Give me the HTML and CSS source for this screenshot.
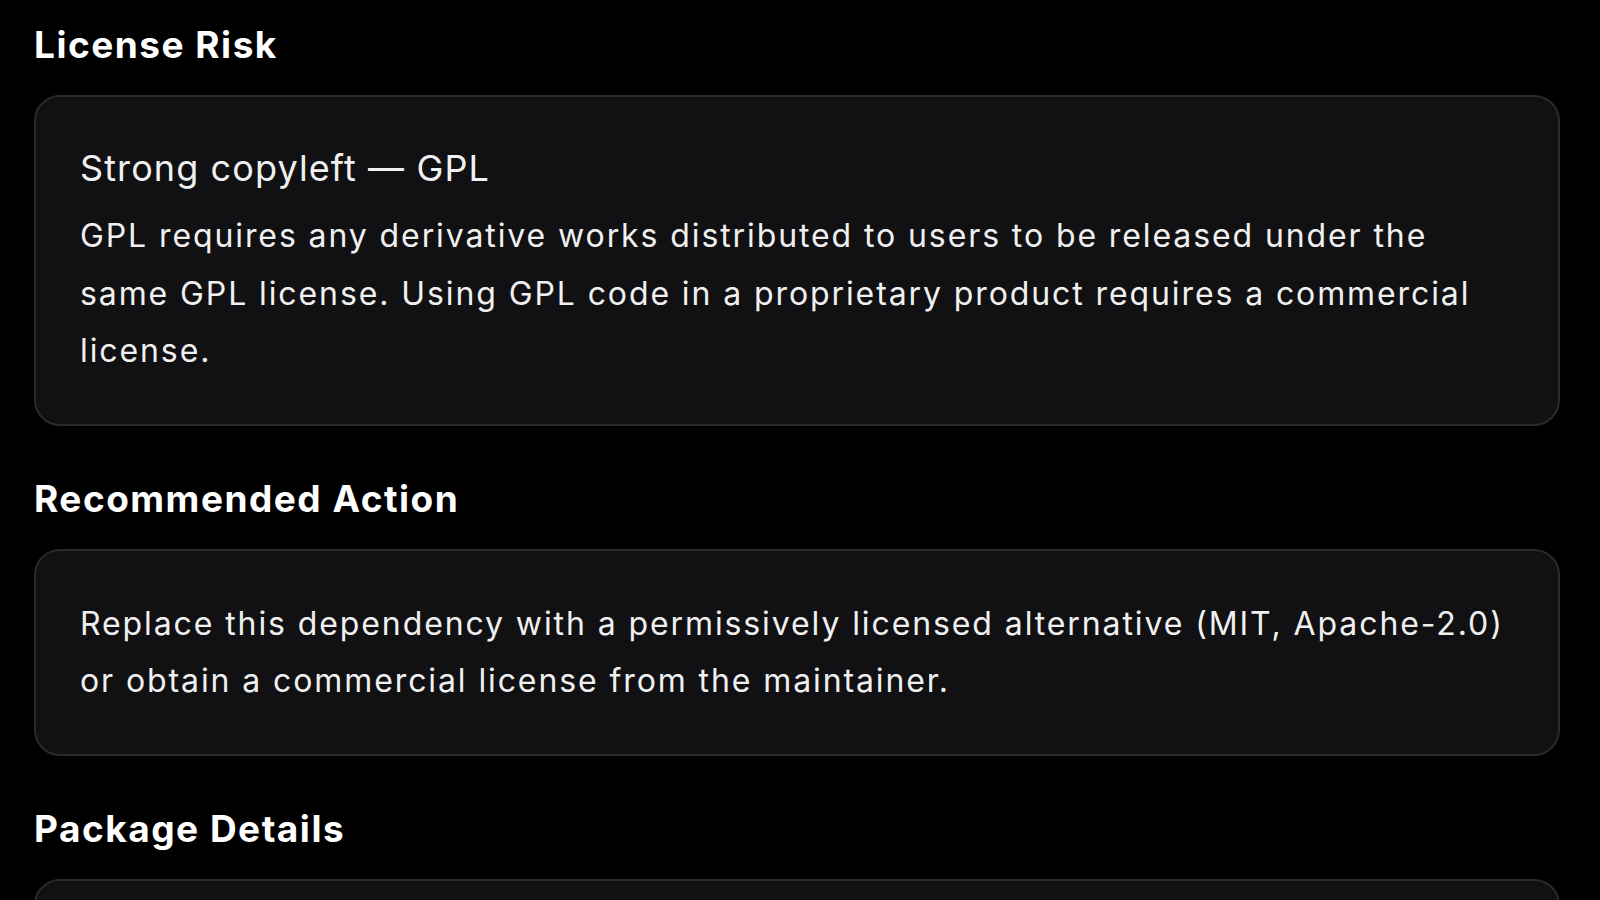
FILE: index.html
```html
<!DOCTYPE html>
<html lang="en">
<head>
  <meta charset="UTF-8">
  <meta name="viewport" content="width=device-width, initial-scale=1.0">
  <title>License Risk</title>
  <link rel="stylesheet" href="styles.css">
</head>
<body>
  <main class="details">
    <section class="block">
      <h2 class="block-title">License Risk</h2>
      <div class="card">
        <h3 class="card-title">Strong copyleft — GPL</h3>
        <p class="card-text">GPL requires any derivative works distributed to users to be released under the same GPL license. Using GPL code in a proprietary product requires a commercial license.</p>
      </div>
    </section>

    <section class="block">
      <h2 class="block-title">Recommended Action</h2>
      <div class="card">
        <p class="card-text">Replace this dependency with a permissively licensed alternative (MIT, Apache-2.0) or obtain a commercial license from the maintainer.</p>
      </div>
    </section>

    <section class="block">
      <h2 class="block-title">Package Details</h2>
      <div class="card card-empty"></div>
    </section>
  </main>
</body>
</html>
```

FILE: styles.css
```css
html, body {
  margin: 0;
  background-color: #000;
}
body {
  font-family: Inter, "Noto Sans", sans-serif;
  color: #f0f0f1;
  overflow: hidden;
  height: 100vh;
}
.details {
  display: flex;
  flex-direction: column;
  gap: 51px;
  padding: 23px 40px 0 34px;
}
.block-title {
  margin: 0 0 28px;
  font-size: 37px;
  line-height: 44px;
  font-weight: 700;
  letter-spacing: 1.5px;
  color: #fff;
}
.card {
  background-color: #111113;
  border: 2px solid #2a2a2e;
  border-radius: 26px;
  padding: 44px;
}
.card-empty {
  min-height: 120px;
}
.card-title {
  margin: 0 0 12px;
  font-size: 36px;
  line-height: 54px;
  font-weight: 400;
  letter-spacing: 1.1px;
}
.card-text {
  margin: 0;
  font-size: 32px;
  line-height: 1.8;
  letter-spacing: 1.9px;
}
```
